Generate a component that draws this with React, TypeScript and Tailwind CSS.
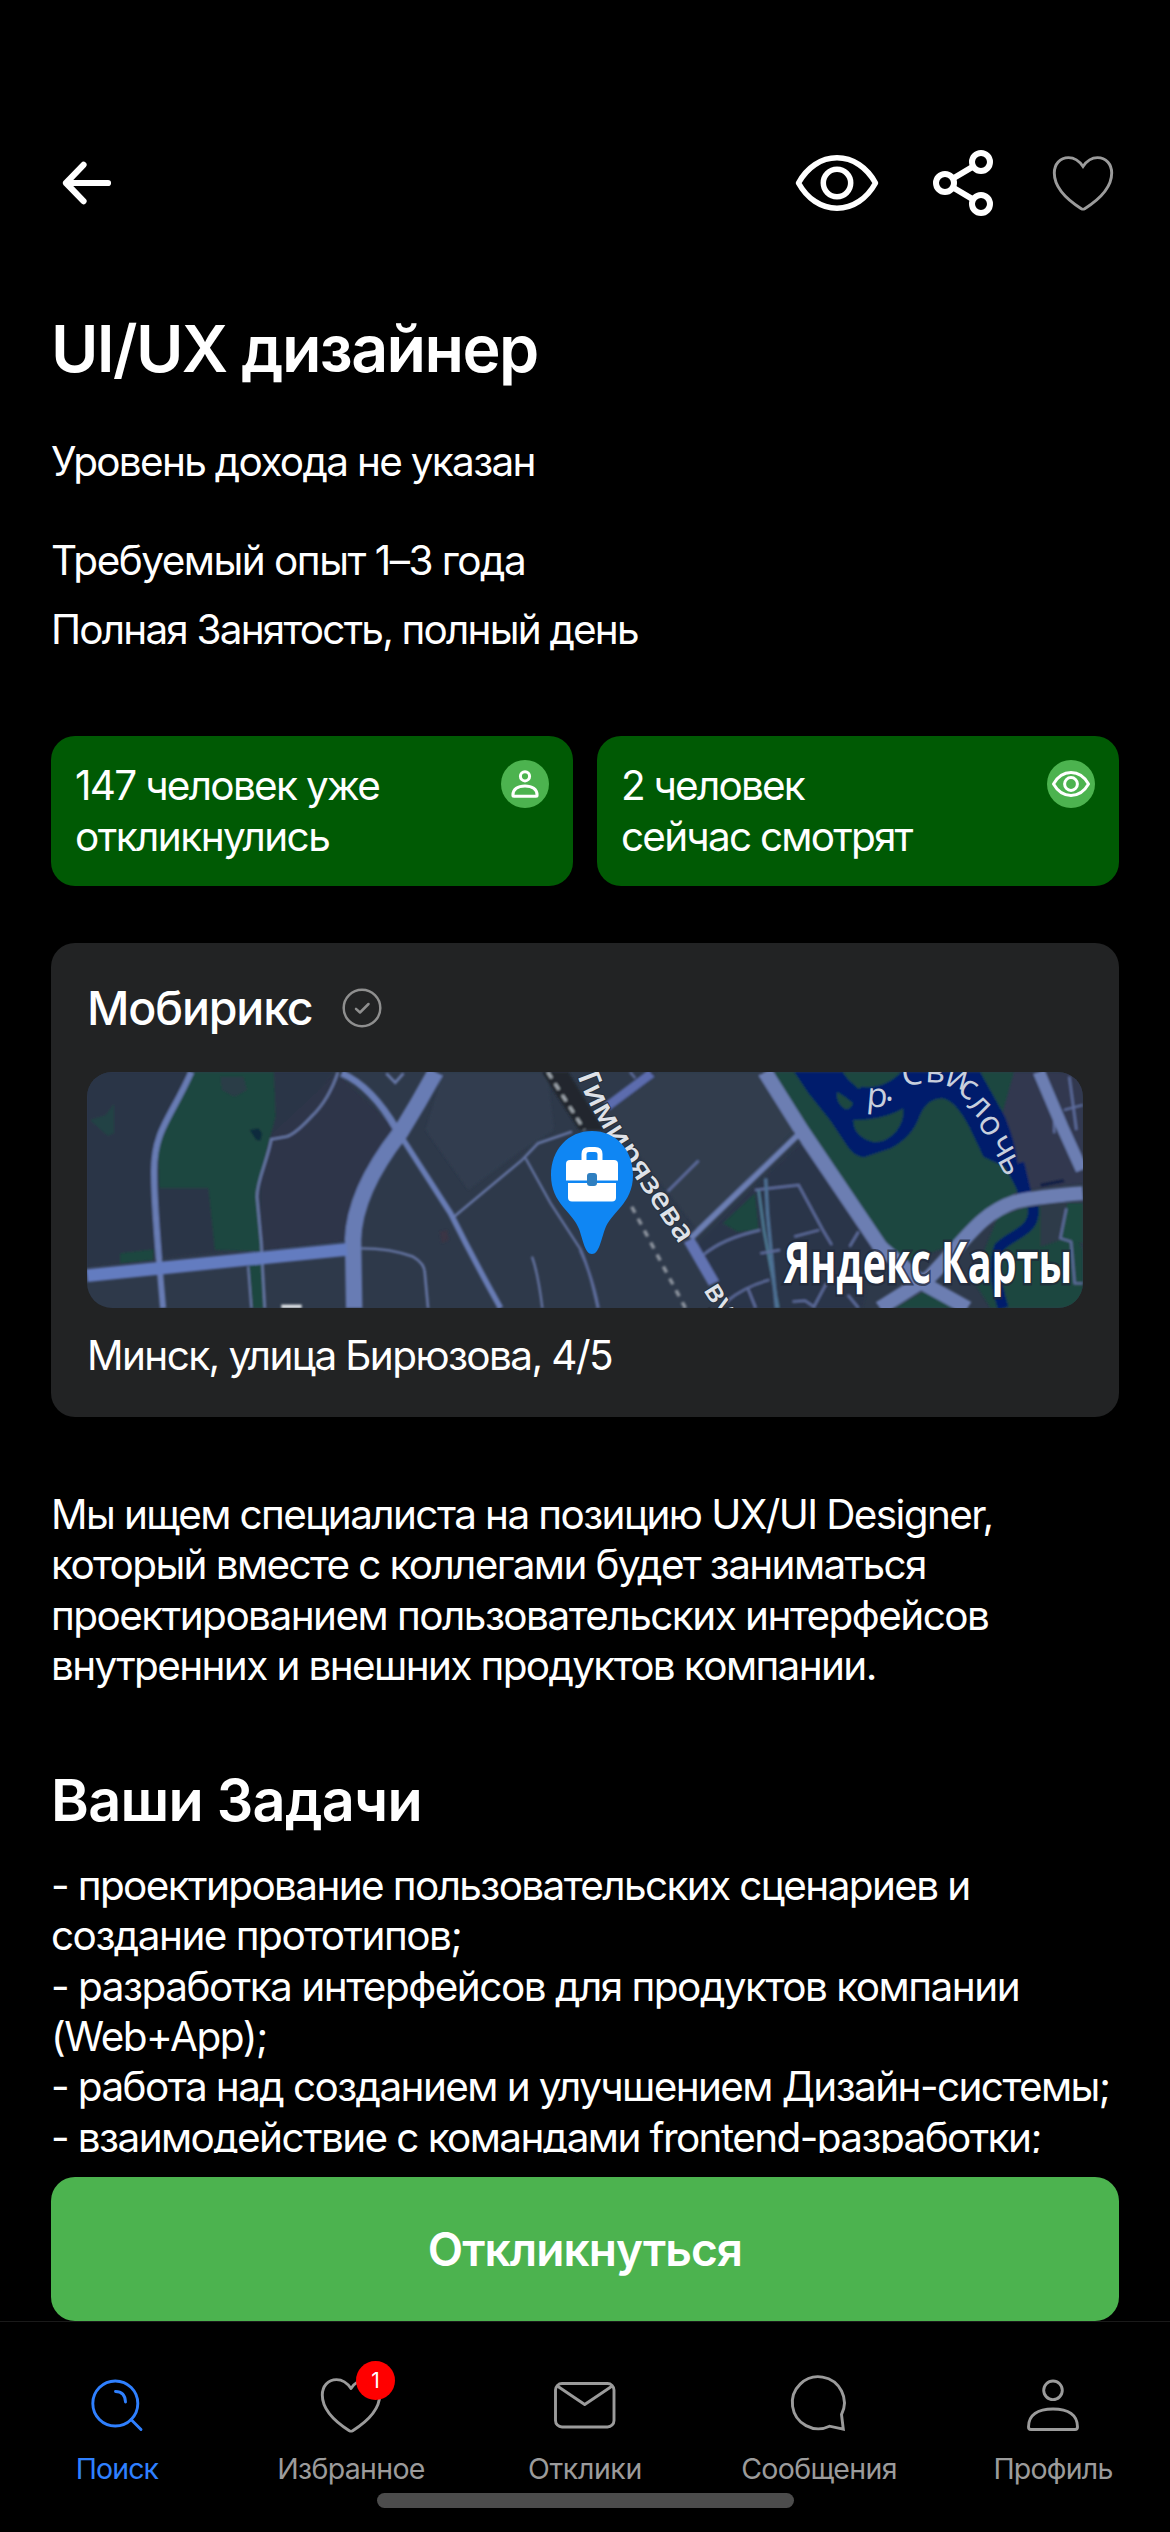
import type { ReactNode } from "react";

function CompanyMap() {
  return (
    <svg className="block h-[236px] w-[996px] rounded-[25px]" viewBox="0 0 996 236" fill="none">
      <defs>
        <filter id="soft" x="0" y="0" width="996" height="236" filterUnits="userSpaceOnUse">
          <feGaussianBlur stdDeviation="0.9" />
        </filter>
        <path id="street" d="M489 0 Q500 34 534 84 L596 178" />
      </defs>
      <rect width="996" height="236" fill="#2e394a" />
      <g filter="url(#soft)">
        {/* western districts */}
        <g transform="translate(-47.14 -142) scale(0.35714 0.33333)">
          <path d="M132 426H830L640 640L620 950L132 1010Z" fill="#2c3547" />
          <path d="M620 640L830 430L1000 600L870 930L620 960Z" fill="#2d3648" />
          <path d="M1130 426H1420L1440 600L1350 660L1200 780L1080 600Z" fill="#323e4f" />
          <path d="M425 426H655L660 560L640 640L610 790L618 965L490 960L472 775L335 775L330 650Z" fill="#1c463f" />
          <path d="M505 440H570L580 480L545 500L510 480Z" fill="#2c3c47" />
          <path d="M140 570L185 555L208 520V610L190 618Z" fill="#234244" />
          <path d="M225 970L318 958V990L225 1000Z" fill="#1c463f" />
          <path d="M585 1000L625 995L632 1134H596Z" fill="#1c463f" />
          <path d="M587 600L612 595L622 610L618 632L606 630Z" fill="#0b2b3c" />
          <path d="M1120 905L1140 900L1145 930L1125 940Z" fill="#3a3544" />
          <g stroke="#6878a8">
            <path d="M835 426C815 490 790 530 760 560Q715 612 690 620L648 628C635 700 608 750 608 800L620 940L630 1134" strokeWidth="7" />
            <path d="M583 1010L592 1134" strokeWidth="6" />
            <path d="M970 430L995 458L1018 430" strokeWidth="8" />
            <path d="M900 955C980 955 1020 970 1045 980Q1078 1000 1078 1030L1087 1134" strokeWidth="7" />
            <path d="M1160 860L1350 690L1395 640L1490 605" strokeWidth="7" />
            <path d="M1360 685L1430 820L1515 960C1540 1020 1550 1080 1562 1134" strokeWidth="6" />
            <path d="M1378 980Q1395 1030 1407 1134" strokeWidth="6" />
          </g>
          <g stroke="#687cb4">
            <path d="M424 426C390 510 350 570 335 620Q318 670 320 740C320 830 332 970 345 1134" strokeWidth="17" />
            <path d="M1000 600L1150 850Q1215 990 1290 1134" strokeWidth="16" />
            <path d="M845 430Q930 470 1000 600" strokeWidth="20" />
            <path d="M1108 426Q1060 520 1008 610C950 690 880 810 877 930L880 1134" strokeWidth="46" />
            <path d="M132 1037L860 958" strokeWidth="38" stroke="#647bc0" />
          </g>
          <path d="M1405 426H1480L1580 600H1510Z" fill="#20272f" />
          <path d="M1422 426L1525 600" stroke="#9fa6ad" strokeWidth="9" strokeDasharray="22 18" />
          <path d="M676 1124H733V1134H676Z" fill="#e8ebee" />
        </g>

        {/* eastern districts */}
        <g transform="translate(493 -142) scale(0.35714 0.33333)">
          <path d="M220 426H500L600 600L330 900L60 530Z" fill="#323d4d" />
          <path d="M540 426H1215L1200 560L1230 780L1130 860L1080 930L900 1000L620 600Z" fill="#1c463f" />
          <path d="M1215 426H1408V760L1230 780L1180 560Z" fill="#303850" />
          <path d="M620 640L830 960L790 1134H420L330 940L480 780Z" fill="#2c364a" />
          <path d="M400 880L490 790L500 900L440 905Z" fill="#1c463f" />
          <path d="M1100 1050L1170 860L1250 830L1290 830H1350L1408 960V1134H1150Z" fill="#1c463f" />
          <path d="M1290 800L1365 820L1345 930L1290 950Z" fill="#2e3a48" />
          <path d="M880 1134L960 1085L1060 1134Z" fill="#1c463f" />
          <path d="M1365 820H1408V940L1345 920Z" fill="#1d4a40" />
          {/* river */}
          <path d="M600 426H735Q790 490 830 535Q900 530 910 426H1120L1190 560Q1220 640 1225 700L1262 780H1225L1190 710L1130 680L1090 590Q1050 510 1015 505Q970 505 950 560Q930 620 870 655L795 682Q770 680 750 650L700 570L640 490Z" fill="#031f6c" />
          <path d="M735 426H895Q870 480 810 490Q760 470 735 426Z" fill="#1c463f" />
          <path d="M790 470Q850 480 900 426H960L900 540H765L745 500Z" fill="#031f6c" />
          <path d="M720 485Q745 500 765 520Q755 545 738 535Q715 515 720 485Z" fill="#1c463f" />
          <path d="M765 570Q850 570 905 535Q910 570 885 605Q855 640 820 636Q765 620 765 570Z" fill="#1c463f" />
          <path d="M1268 830C1280 900 1215 910 1175 950Q1150 1020 1185 1134" stroke="#031f6c" strokeWidth="30" />
          <path d="M1225 700L1245 790" stroke="#031f6c" strokeWidth="38" />
          <path d="M1290 766L1355 752" stroke="#111b45" strokeWidth="9" />
          <g stroke="#5d6c9c" strokeWidth="7">
            <path d="M245 785L332 692" />
            <path d="M140 426L155 445" />
            <path d="M490 780L612 765L680 900L705 945" />
            <path d="M500 780L515 900L555 1134" stroke="#4d7a94" />
            <path d="M520 745L525 850L550 1134" stroke="#4d6f94" strokeWidth="9" />
            <path d="M345 975Q400 925 505 900" />
            <path d="M600 920L670 900" />
            <path d="M780 905L755 950" />
            <path d="M410 1115Q460 1070 530 1050" />
            <path d="M470 1075L492 1134" />
            <path d="M595 1115L630 1112L655 1130L690 1060" />
            <path d="M750 1095L780 1134" />
            <path d="M505 970L560 960" />
            <path d="M1362 835L1345 925L1375 935L1385 1060H1408" />
            <path d="M1370 440L1390 600M1355 540L1408 525M1328 570V610" />
            <path d="M0 960Q35 1040 52 1134" />
          </g>
          <g stroke="#6c7eb2">
            <path d="M75 530L200 430" strokeWidth="26" stroke="#5b6cae" />
            <path d="M615 610L310 925" strokeWidth="17" />
            <path d="M305 930L375 1060" strokeWidth="32" stroke="#6273b2" />
            <path d="M518 426L620 600L850 965" strokeWidth="42" />
            <path d="M1285 426L1350 590L1405 720" strokeWidth="34" />
            <path d="M1408 790Q1280 800 1220 815C1120 850 1080 930 980 1040L840 1134" strokeWidth="42" />
            <path d="M840 950L960 1060L1085 1134" strokeWidth="42" />
          </g>
          <path d="M145 830L295 1134" stroke="#8b929c" strokeWidth="10" strokeDasharray="20 20" />
        </g>
      </g>

      <g
        fill="#dfe2e8"
        stroke="#262f3d"
        strokeWidth="2"
        paintOrder="stroke"
        fontWeight="600"
        fontFamily="'Open Sans', 'Noto Sans', sans-serif"
      >
        <text fontSize="30">
          <textPath href="#street" textLength="202" lengthAdjust="spacingAndGlyphs">
            Тимирязева
          </textPath>
        </text>
        <text fontSize="30" transform="translate(616 218) rotate(58)">
          ву
        </text>
      </g>
      <text
        fontSize="34"
        fill="#c8cfdc"
        fontFamily="'Open Sans', 'Noto Sans', sans-serif"
        x="779 798 806 815 838 857 869.5 879 889.5 902 910"
        y="34 29 20 13 10 13 21 34 50 70 88"
        rotate="5 0 0 -3 3 15 30 45 57 60 62"
      >
        р. Свислочь
      </text>

      {/* employer pin */}
      <path
        d="M505 59C529 59 546 78 546 103C546 132 524 140 518 157C514 168 512 182 505 182S496 168 492 157C486 140 464 132 464 103C464 78 481 59 505 59Z"
        fill="#0f86f3"
      />
      <path d="M497 88V82Q497 77.500 502 77.500H508Q513 77.500 513 82V88" stroke="#fff" strokeWidth="5" />
      <path d="M483 88H527Q531 88 531 92V108.500H479V92Q479 88 483 88Z" fill="#fff" />
      <path d="M481 111H529V125.500Q529 129.500 525 129.500H485Q481 129.500 481 125.500Z" fill="#fff" />
      <rect x="500" y="101" width="10" height="13" rx="3" fill="#2f7fc0" />

      <text
        x="697"
        y="211"
        fontSize="57"
        fontWeight="700"
        fill="#fff"
        stroke="#20283a"
        strokeOpacity="0.7"
        strokeWidth="5"
        paintOrder="stroke"
        textLength="288"
        lengthAdjust="spacingAndGlyphs"
        fontFamily="'Open Sans', 'Noto Sans', sans-serif"
      >
        Яндекс Карты
      </text>
    </svg>
  );
}

const heartPath =
  "M36 19.500C32 13.500 27 10.600 21.500 10.600C13 10.600 7.300 17 7.300 26C7.300 41 19 52 34.300 61.700Q36 62.600 37.700 61.700C53 52 64.700 41 64.700 26C64.700 17 59 10.600 50.500 10.600C45 10.600 40 13.500 36 19.500Z";

function Stat({ top, topClass, bottom, bottomClass, icon }: {
  top: string;
  topClass: string;
  bottom: string;
  bottomClass: string;
  icon: ReactNode;
}) {
  return (
    <div className="flex h-[150px] flex-1 items-start justify-between rounded-[24px] bg-[#005a04] p-6">
      <div className="pt-px leading-[50.5px] whitespace-nowrap">
        <div className={topClass}>{top}</div>
        <div className={bottomClass}>{bottom}</div>
      </div>
      <div className="size-12 rounded-full bg-[#4cb34f]">{icon}</div>
    </div>
  );
}

function Tab({ label, labelClass, active, children }: {
  label: string;
  labelClass: string;
  active?: boolean;
  children: ReactNode;
}) {
  return (
    <div className={`flex flex-1 flex-col items-center ${active ? "text-[#2f80ff]" : "text-[#9b9b9b]"}`}>
      <div className="relative size-[72px]">{children}</div>
      <div className={`mt-[10.5px] text-[28.5px] leading-[34px] whitespace-nowrap ${labelClass}`}>{label}</div>
    </div>
  );
}

function TabIcon({ children }: { children: ReactNode }) {
  return (
    <svg
      className="block size-[72px]"
      viewBox="0 0 72 72"
      fill="none"
      stroke="currentColor"
      strokeWidth="2.9"
      strokeLinecap="round"
      strokeLinejoin="round"
    >
      {children}
    </svg>
  );
}

export default function App() {
  return (
    <div className="flex h-[2532px] w-[1170px] flex-col overflow-hidden bg-black font-[Inter,sans-serif] text-[40.5px] text-white">
      <div className="h-[2153px] shrink-0 overflow-hidden px-[51px]">
        <header className="flex h-[309px] items-start pt-[147px]">
          <svg className="-ml-px size-[72px]" viewBox="0 0 72 72" fill="none" stroke="#fff" strokeWidth="6.200" strokeLinecap="round" strokeLinejoin="round">
            <path d="M58 36H16M33.500 17.800L16 36L33.500 54.200" />
          </svg>
          <div className="ml-auto flex">
            <svg className="mr-[45px] h-[72px] w-[90px]" viewBox="0 0 90 72" fill="none" stroke="#fff" strokeWidth="5.500" strokeLinejoin="round">
              <path d="M6.500 36C15 20.500 29 10.800 45 10.800S75 20.500 83.500 36C75 51.500 61 61.200 45 61.200S15 51.500 6.500 36Z" />
              <circle cx="45" cy="36" r="13.700" />
            </svg>
            <svg className="mr-12 size-[72px]" viewBox="0 0 72 72" fill="none" stroke="#fff" strokeWidth="6">
              <circle cx="54" cy="15" r="9" />
              <circle cx="18" cy="36" r="9" />
              <circle cx="54" cy="57" r="9" />
              <path d="M26 31.500L46 19.700M26 40.500L46 52.300" />
            </svg>
            <svg className="size-[72px]" viewBox="0 0 72 72" fill="none" stroke="#9b9b9b" strokeWidth="2.900" strokeLinejoin="miter">
              <path d={heartPath} />
            </svg>
          </div>
        </header>

        <h1 className="text-[64.5px] leading-[80px] font-semibold tracking-[-1.6px]">UI/UX дизайнер</h1>
        <p className="mt-12 leading-[50px] tracking-[-1.69px]">Уровень дохода не указан</p>
        <p className="mt-[49px] leading-[50px] tracking-[-1.51px]">Требуемый опыт 1–3 года</p>
        <p className="mt-[19px] leading-[50px] tracking-[-1.81px]">Полная Занятость, полный день</p>

        <div className="mt-[81px] flex gap-6">
          <Stat
            top="147 человек уже"
            topClass="tracking-[-1.7px]"
            bottom="откликнулись"
            bottomClass="tracking-[-1.55px]"
            icon={
              <svg viewBox="0 0 48 48" fill="none" stroke="#fff" strokeWidth="3" strokeLinejoin="round">
                <circle cx="24" cy="16.300" r="4.600" />
                <path d="M11.900 35.300C11.900 29 17 26 24 26S36.100 29 36.100 35.300Q36.100 36.300 35 36.300H13Q11.900 36.300 11.900 35.300Z" />
              </svg>
            }
          />
          <Stat
            top="2 человек"
            topClass="tracking-[-1.8px]"
            bottom="сейчас смотрят"
            bottomClass="tracking-[-1.78px]"
            icon={
              <svg viewBox="0 0 48 48" fill="none" stroke="#fff" strokeWidth="3" strokeLinejoin="round">
                <path d="M6.500 24C10.500 17 16.500 12.600 24 12.600S37.500 17 41.500 24C37.500 31 31.500 35.400 24 35.400S10.500 31 6.500 24Z" />
                <circle cx="24" cy="24" r="6.400" />
              </svg>
            }
          />
        </div>

        <section className="mt-[57px] h-[474px] rounded-[24px] bg-[#222324] px-9 pt-[37px]">
          <div className="flex items-center">
            <h2 className="text-[46.5px] leading-[56px] font-medium tracking-[-1.15px]">Мобирикс</h2>
            <svg className="ml-[28px] size-[44px]" viewBox="0 0 44 44" fill="none" stroke="#8f8f8f" strokeWidth="2.500" strokeLinecap="round" strokeLinejoin="round">
              <circle cx="22" cy="22" r="18.300" />
              <path d="M16 22.800L20 26.500L28.500 18" />
            </svg>
          </div>
          <div className="mt-9">
            <CompanyMap />
          </div>
          <p className="mt-[23px] leading-[50px] tracking-[-1.6px]">Минск, улица Бирюзова, 4/5</p>
        </section>

        <div className="mt-[73px] leading-[50.3px] whitespace-nowrap">
          <p className="tracking-[-1.61px]">Мы ищем специалиста на позицию UX/UI Designer,</p>
          <p className="tracking-[-1.64px]">который вместе с коллегами будет заниматься</p>
          <p className="tracking-[-1.54px]">проектированием пользовательских интерфейсов</p>
          <p className="tracking-[-1.64px]">внутренних и внешних продуктов компании.</p>
        </div>

        <h2 className="mt-[74px] text-[57.5px] leading-[70px] font-semibold tracking-[-0.72px]">Ваши Задачи</h2>
        <div className="mt-[26px] leading-[50.3px] whitespace-nowrap">
          <p className="tracking-[-1.63px]">- проектирование пользовательских сценариев и</p>
          <p className="tracking-[-1.52px]">создание прототипов;</p>
          <p className="tracking-[-1.5px]">- разработка интерфейсов для продуктов компании</p>
          <p className="tracking-[-1.48px]">(Web+App);</p>
          <p className="tracking-[-1.6px]">- работа над созданием и улучшением Дизайн-системы;</p>
          <p className="tracking-[-1.6px]">- взаимодействие с командами frontend-разработки;</p>
        </div>
      </div>

      <div className="shrink-0 px-[51px] pt-6">
        <button className="block h-[144px] w-full rounded-[24px] bg-[#4cb34f] text-[46px] font-semibold tracking-[-0.92px]">
          Откликнуться
        </button>
      </div>

      <nav className="relative flex flex-1 border-t border-[#1a1a1a] pt-[47px]">
        <Tab label="Поиск" labelClass="tracking-[-0.9px]" active>
          <TabIcon>
            <circle cx="34.300" cy="34.500" r="22.500" />
            <path d="M50 50.500L60 60.500M34.500 22.500Q44 22.500 44.500 33" />
          </TabIcon>
        </Tab>
        <Tab label="Избранное" labelClass="tracking-[-0.68px]">
          <TabIcon>
            <path d={heartPath} />
          </TabIcon>
          <span className="absolute top-[-8px] left-[41px] flex size-[39px] items-center justify-center rounded-full bg-[#ff0000] text-[21px] leading-none text-white">
            1
          </span>
        </Tab>
        <Tab label="Отклики" labelClass="tracking-[-0.38px]">
          <TabIcon>
            <rect x="6.500" y="14.500" width="58.500" height="43.500" rx="6.500" />
            <path d="M9 17.500L35.700 35.500L62.500 17.500" />
          </TabIcon>
        </Tab>
        <Tab label="Сообщения" labelClass="tracking-[-0.66px]">
          <TabIcon>
            <path strokeLinejoin="miter" d="M46.500 57.200A26 26 0 1 1 58.500 45.500L60.300 60.200Z" />
          </TabIcon>
        </Tab>
        <Tab label="Профиль" labelClass="tracking-[-0.77px]">
          <TabIcon>
            <circle cx="36" cy="21.300" r="9.300" />
            <path d="M11.500 58C11.500 46 20.500 40 36 40S60.500 46 60.500 58Q60.500 60.500 58 60.500H14Q11.500 60.500 11.500 58Z" />
          </TabIcon>
        </Tab>
        <div className="absolute bottom-6 left-[377px] h-[15px] w-[417px] rounded-full bg-[#4c4c4c]" />
      </nav>
    </div>
  );
}
